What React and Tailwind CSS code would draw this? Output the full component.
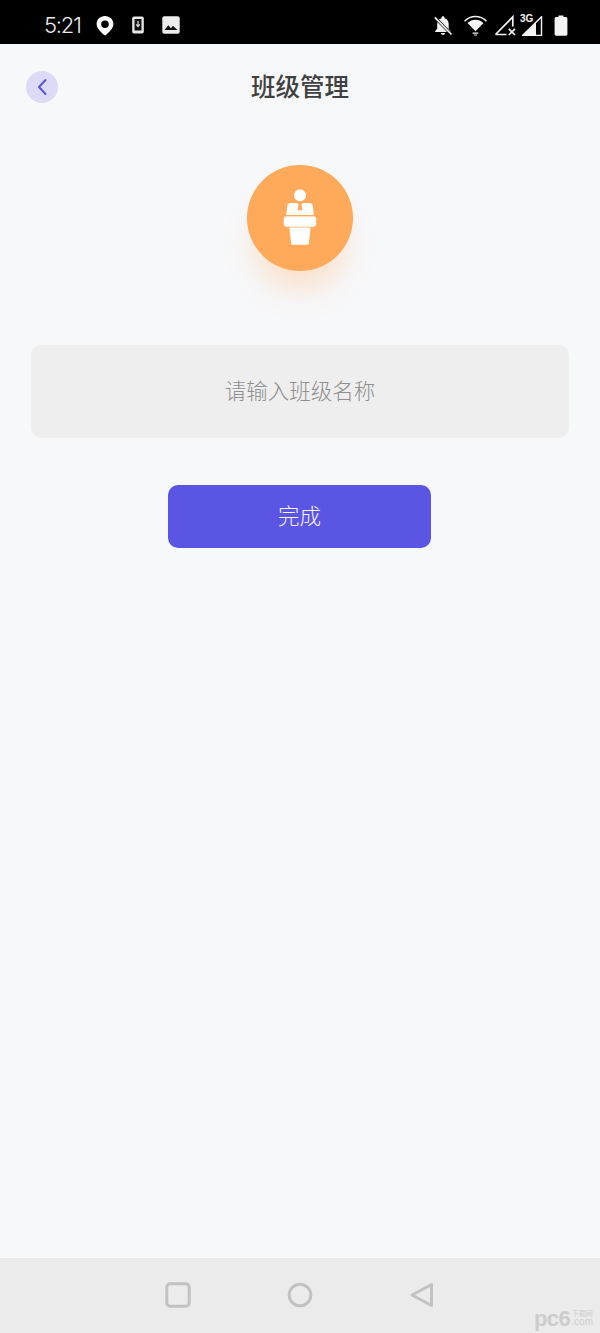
import React from "react";

const CJK = { fontFamily: '"Noto Sans CJK SC", "Liberation Sans", sans-serif' };

function StatusLeft() {
  return (
    <div className="flex items-center">
      <span className="text-[22px] leading-none text-[#ececec] tracking-[-1.2px] w-[37px] mt-[6px]" style={{ fontFamily: '"Inter", "Liberation Sans", sans-serif', fontWeight: 300 }}>5:21</span>
      <svg className="ml-[15px] mt-[6px]" width="18" height="21" viewBox="0 0 18 20">
        <path fillRule="evenodd" fill="#fff" d="M9 0.5C4.1 0.5 0.6 4.1 0.6 8.6c0 4.2 4.4 8.4 7.6 11 .5.4 1.1.4 1.6 0 3.2-2.6 7.6-6.8 7.6-11C17.4 4.1 13.9 .5 9 .5zM9 5a3.8 3.8 0 1 1 0 7.6A3.8 3.8 0 0 1 9 5z" />
      </svg>
      <svg className="ml-[18px] mt-[6px]" width="12" height="18" viewBox="0 0 12 18">
        <rect x="0.2" y="0.5" width="11.6" height="17" rx="1.8" fill="#e8e8e8" />
        <rect x="2.5" y="3" width="7" height="11.5" fill="#111" />
        <path d="M6 5v5M4.2 8.4 6 10.6 7.8 8.4" stroke="#ddd" strokeWidth="1.2" fill="none" />
      </svg>
      <svg className="ml-[18px] mt-[6px]" width="18" height="18" viewBox="0 0 18 18">
        <rect x="0.3" y="0.3" width="17.4" height="17.4" rx="2" fill="#ededed" />
        <path d="M2.5 14 6.3 9.3l2.6 2.9 2-2.4 4.6 4.2z" fill="#111" />
      </svg>
    </div>
  );
}

function StatusRight() {
  return (
    <div className="flex items-center mt-[6px]">
      <svg width="20" height="21" viewBox="0 0 20 21">
        <path fill="#f4f4f4" d="M10 1.2c-.9 0-1.5.6-1.5 1.5v.6C5.7 4 4.2 6.3 4.2 9.2v4.6L2.2 16v1h13.4L5.5 6.6 15.8 17h1.8v-1l-1.9-2.2V9.2c0-2.9-1.5-5.2-4.2-5.9v-.6c0-.9-.6-1.5-1.5-1.5zM8 18h4a2 2 0 0 1-4 0z" />
        <path d="M2 2.5 18.5 19.5" stroke="#000" strokeWidth="3" />
        <path d="M1.8 2.3 18.5 19.5" stroke="#f4f4f4" strokeWidth="1.7" />
      </svg>
      <svg className="ml-[11px]" width="23" height="21" viewBox="0 0 24 22">
        <path d="M0.5 6.5C3.8 3.2 7.6 1.6 12 1.6s8.2 1.6 11.5 4.9" stroke="#f4f4f4" strokeWidth="1.6" fill="none" />
        <path d="M3.6 8.5C6 6.2 8.8 5 12 5s6 1.2 8.4 3.5L12 17z" fill="#f4f4f4" />
        <path d="M9 19h6M10.5 21h3" stroke="#f4f4f4" strokeWidth="1.2" />
      </svg>
      <svg className="ml-[7px]" width="23" height="21" viewBox="0 0 23 21">
        <path d="M1.5 19.5 18.8 1.8V11.5M1.5 19.5H12.5" stroke="#f4f4f4" strokeWidth="1.7" fill="none" />
        <path d="M14.8 13.8 21 20M21 13.8 14.8 20" stroke="#f4f4f4" strokeWidth="1.7" />
      </svg>
      <div className="relative ml-[3px] w-[24px] h-[22px]">
        <svg className="absolute bottom-0" width="21" height="20" viewBox="0 0 21 20" style={{ left: 2 }}>
          <path d="M0.5 19.5 19.5 .8V19.5Z" fill="none" stroke="#f4f4f4" strokeWidth="1.4" />
          <path d="M0.5 19.5 14 6.2V19.5Z" fill="#f4f4f4" />
        </svg>
        <span className="absolute left-0 top-[-1px] text-[10px] leading-[12px] font-bold text-[#f4f4f4]" style={{ fontFamily: '"Liberation Sans", sans-serif' }}>3G</span>
      </div>
      <svg className="ml-[10px]" width="14" height="21" viewBox="0 0 14 21">
        <path fill="#f4f4f4" d="M4.5 0.5h5v1.6h2.3c.9 0 1.6.7 1.6 1.6v15.4c0 .9-.7 1.6-1.6 1.6H2.2c-.9 0-1.6-.7-1.6-1.6V3.7c0-.9.7-1.6 1.6-1.6h2.3z" />
      </svg>
    </div>
  );
}

function Lectern() {
  return (
    <svg className="mb-[2px]" width="34" height="56" viewBox="0 0 34 56">
      <circle cx="17" cy="6.2" r="6" fill="#fff" />
      <path fill="#fff" d="M7.5 14h6.6l1.4 1.6-1 5.6h5l-1-5.6 1.4-1.6h6.6c1.8 0 2.8 1 3.3 2.8l1 9.2H3.2l1-9.2c.5-1.8 1.5-2.8 3.3-2.8z" />
      <path fill="#fff" stroke="#ffa95a" strokeWidth="0.8" d="M3.5 27h27c2 0 3.1 1.2 3.1 3v4.6c0 2-1.2 3.6-3.1 3.6h-27C1.6 38.2.4 36.6.4 34.6V30c0-1.8 1.1-3 3.1-3z" />
      <path fill="#fff" d="M6.4 38.6h21.2l-1.8 16.2c-.1.5-.4.9-1 .9H9.2c-.6 0-.9-.4-1-.9z" />
    </svg>
  );
}

export default function App() {
  return (
    <div className="w-[600px] h-[1333px] flex flex-col bg-[#f7f8fa] overflow-hidden" style={CJK}>
      <div className="h-[44px] shrink-0 bg-black flex items-center justify-between pl-[44px] pr-[32px]">
        <StatusLeft />
        <StatusRight />
      </div>

      <div className="flex-1 flex flex-col items-center">
        <div className="relative w-full h-[86px] flex items-center justify-center">
          <div className="absolute left-[26px] top-[27px] w-[32px] h-[32px] rounded-full bg-[#dcdaf6] flex items-center justify-center">
            <svg width="12" height="18" viewBox="0 0 12 18">
              <path d="M9.5 2 3 9l6.5 7" fill="none" stroke="#5b55d0" strokeWidth="2" strokeLinecap="round" strokeLinejoin="round" />
            </svg>
          </div>
          <h1 className="text-[24.5px] leading-none font-medium text-[#404040] mb-[2px]">班级管理</h1>
        </div>

        <div className="mt-[35px] w-[106px] h-[106px] rounded-full bg-[#ffa95a] flex items-center justify-center shadow-[0_26px_30px_-8px_rgba(255,169,90,0.3)]">
          <Lectern />
        </div>

        <div className="mt-[74px] w-[538px] h-[93px] rounded-[10px] bg-[#eeeeee] flex items-center justify-center">
          <span className="text-[21.5px] leading-none text-[#8f8f8f] font-light mb-[3px]">请输入班级名称</span>
        </div>

        <button className="mt-[47px] mr-[1px] w-[263px] h-[63px] rounded-[10px] bg-[#5b55e3] flex items-center justify-center text-[21.5px] leading-none text-[#f4f4fc] font-light">
          <span className="mb-[3px]">完成</span>
        </button>
      </div>

      <div className="relative h-[75px] shrink-0 bg-[#ebebeb] flex items-center justify-center gap-[96px] pb-[1px]">
        <svg width="26" height="26" viewBox="0 0 26 26">
          <rect x="1.8" y="1.8" width="22.4" height="22.4" rx="3.5" fill="none" stroke="#c2c2c2" strokeWidth="3" />
        </svg>
        <svg width="26" height="26" viewBox="0 0 26 26">
          <circle cx="13" cy="13" r="10.8" fill="none" stroke="#c2c2c2" strokeWidth="3" />
        </svg>
        <svg width="26" height="26" viewBox="0 0 26 26">
          <path d="M22.5 2.5V23.5L3 13z" fill="none" stroke="#c2c2c2" strokeWidth="3" strokeLinejoin="round" />
        </svg>
        <div className="absolute right-[7px] bottom-[3px] flex items-end text-[#cdcdcd] leading-none">
          <span className="text-[22px] font-bold tracking-[-0.5px]" style={{ fontFamily: '"Liberation Sans", sans-serif' }}>pc6</span>
          <span className="flex flex-col items-center ml-[1px] mb-[3px]">
            <span className="text-[7px] leading-[8px]">下载网</span>
            <span className="text-[10px] leading-[10px]" style={{ fontFamily: '"Liberation Sans", sans-serif' }}>.com</span>
          </span>
        </div>
      </div>
    </div>
  );
}
